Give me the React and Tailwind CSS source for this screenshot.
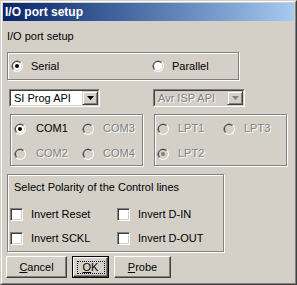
import React from 'react'

// ── classic win32 bits ─────────────────────────────────────────────────────────
function Radio({ checked, disabled }) {
  return (
    <svg width="12" height="12" viewBox="0 0 12 12" className="shrink-0">
      <circle cx="6" cy="6" r="6" fill="#ffffff" />
      <path d="M1.76 10.24 A6 6 0 0 1 10.24 1.76 Z" fill="#808080" />
      <circle cx="6" cy="6" r="5" fill="#d4d0c8" />
      <path d="M2.46 9.54 A5 5 0 0 1 9.54 2.46 Z" fill="#404040" />
      <circle cx="6" cy="6" r="4" fill={disabled ? '#d4d0c8' : '#ffffff'} />
      {checked && <circle cx="6" cy="6" r="2" fill={disabled ? '#808080' : '#000000'} />}
    </svg>
  )
}

function Check() {
  return (
    <span className="h-[13px] w-[13px] shrink-0 border border-t-[#808080] border-l-[#808080] border-b-white border-r-white bg-white shadow-[inset_1px_1px_0_#404040,inset_-1px_-1px_0_#d4d0c8]" />
  )
}

function Label({ children, disabled }) {
  return (
    <span className={disabled ? 'text-[#808080] [text-shadow:1px_1px_0_#fff]' : 'text-black'}>{children}</span>
  )
}

function Combo({ text, disabled, w }) {
  return (
    <div className={`flex h-[18px] items-stretch border border-t-[#808080] border-l-[#808080] border-b-white border-r-white ${w}`}>
      <div className={`flex flex-1 items-stretch border border-t-[#404040] border-l-[#404040] border-b-[#d4d0c8] border-r-[#d4d0c8] ${disabled ? 'bg-[#d4d0c8]' : 'bg-white'}`}>
        <span className="flex flex-1 items-center pl-[3px]"><Label disabled={disabled}>{text}</Label></span>
        <span className="flex w-[16px] items-center justify-center border border-t-[#d4d0c8] border-l-[#d4d0c8] border-b-[#404040] border-r-[#404040] bg-[#d4d0c8] shadow-[inset_1px_1px_0_#fff,inset_-1px_-1px_0_#808080]">
          <svg width="7" height="4" viewBox="0 0 7 4">
            <path d="M0 0h7L3.5 4z" fill={disabled ? '#808080' : '#000'} />
          </svg>
        </span>
      </div>
    </div>
  )
}

function Button({ children, w, def }) {
  return (
    <div className={`h-[22px] ${w} ${def ? 'border border-black' : ''}`}>
      <div className="flex h-full w-full items-center justify-center border border-t-white border-l-white border-b-[#404040] border-r-[#404040] shadow-[inset_-1px_-1px_0_#808080]">
        {def ? (
          <span className="m-[2px] flex h-[calc(100%-5px)] w-[calc(100%-5px)] items-center justify-center border border-dotted border-black">{children}</span>
        ) : children}
      </div>
    </div>
  )
}

const etched = 'border border-[#808080] shadow-[inset_1px_1px_0_#fff,1px_1px_0_#fff]'

export default function App() {
  return (
    <div className="h-[285px] w-[297px] bg-[#d4d0c8] font-['Liberation_Sans',Arial,sans-serif] text-[11px] leading-[13px] text-black">
      <div className="h-full w-full border border-t-[#d4d0c8] border-l-[#d4d0c8] border-b-[#404040] border-r-[#404040]">
        <div className="h-full w-full border border-t-white border-l-white border-b-[#808080] border-r-[#808080] p-px">
          {/* title bar */}
          <div className="flex h-[18px] items-center bg-gradient-to-r from-[#0a246a] to-[#a6caf0] pl-[2px] text-[12px] font-bold text-white">
            I/O port setup
          </div>

          <div className="px-[4px]">
            <div className="mt-[9px] h-[13px]">I/O port setup</div>

            {/* serial / parallel */}
            <div className={`mt-[9px] flex h-[28px] w-[232px] items-center ${etched}`}>
              <div className="flex w-[144px] items-center pl-[3px]">
                <Radio checked />
                <span className="ml-[8px]">Serial</span>
              </div>
              <div className="flex items-center">
                <Radio />
                <span className="ml-[8px]">Parallel</span>
              </div>
            </div>

            {/* combos */}
            <div className="mt-[9px] flex">
              <div className="ml-[2px]"><Combo text="SI Prog API" w="w-[91px]" /></div>
              <div className="ml-[53px]"><Combo text="Avr ISP API" w="w-[92px]" disabled /></div>
            </div>

            {/* ports */}
            <div className="mt-[7px] flex">
              <div className={`ml-[3px] h-[52px] w-[133px] ${etched} pl-[3px] pt-[7px]`}>
                <div className="grid grid-cols-[68px_1fr] gap-y-[12px]">
                  <div className="flex items-center"><Radio checked /><span className="ml-[10px]">COM1</span></div>
                  <div className="flex items-center"><Radio disabled /><span className="ml-[9px]"><Label disabled>COM3</Label></span></div>
                  <div className="flex items-center"><Radio disabled /><span className="ml-[10px]"><Label disabled>COM2</Label></span></div>
                  <div className="flex items-center"><Radio disabled /><span className="ml-[9px]"><Label disabled>COM4</Label></span></div>
                </div>
              </div>
              <div className={`ml-[11px] h-[52px] w-[133px] ${etched} pl-[2px] pt-[7px]`}>
                <div className="grid grid-cols-[66px_1fr] gap-y-[12px]">
                  <div className="flex items-center"><Radio disabled /><span className="ml-[9px]"><Label disabled>LPT1</Label></span></div>
                  <div className="flex items-center"><Radio disabled /><span className="ml-[9px]"><Label disabled>LPT3</Label></span></div>
                  <div className="flex items-center"><Radio checked disabled /><span className="ml-[9px]"><Label disabled>LPT2</Label></span></div>
                </div>
              </div>
            </div>

            {/* polarity */}
            <div className={`mt-[8px] h-[78px] w-[217px] ${etched} pl-[2px]`}>
              <div className="ml-[4px] mt-[6px] h-[13px]">Select Polarity of the Control lines</div>
              <div className="mt-[14px] grid grid-cols-[107px_1fr] gap-y-[11px]">
                <div className="flex items-center"><Check /><span className="ml-[8px]">Invert Reset</span></div>
                <div className="flex items-center"><Check /><span className="ml-[8px]">Invert D-IN</span></div>
                <div className="flex items-center"><Check /><span className="ml-[8px]">Invert SCKL</span></div>
                <div className="flex items-center"><Check /><span className="ml-[8px]">Invert D-OUT</span></div>
              </div>
            </div>

            {/* buttons */}
            <div className="-ml-px mt-[4px] flex gap-[5px]">
              <Button w="w-[61px]"><span><u>C</u>ancel</span></Button>
              <Button w="w-[37px]" def><span><u>O</u>K</span></Button>
              <Button w="w-[57px]"><span><u>P</u>robe</span></Button>
            </div>
          </div>
        </div>
      </div>
    </div>
  )
}
